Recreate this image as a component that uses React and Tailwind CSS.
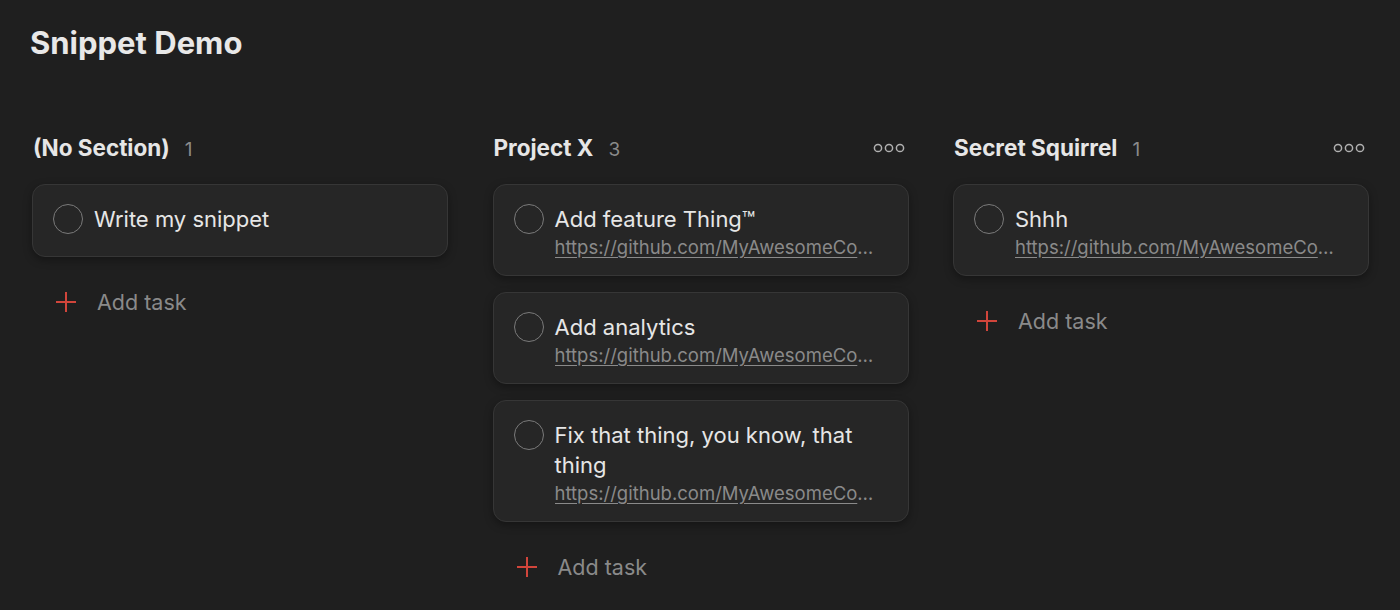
const sections = [
  {
    name: "(No Section)",
    count: 1,
    menu: false,
    tasks: [{ title: "Write my snippet" }],
  },
  {
    name: "Project X",
    count: 3,
    menu: true,
    tasks: [
      { title: "Add feature Thing™", link: "https://github.com/MyAwesomeCompany/MyAwesomeRepo/issues/1" },
      { title: "Add analytics", link: "https://github.com/MyAwesomeCompany/MyAwesomeRepo/issues/2" },
      { title: "Fix that thing, you know, that thing", link: "https://github.com/MyAwesomeCompany/MyAwesomeRepo/issues/3" },
    ],
  },
  {
    name: "Secret Squirrel",
    count: 1,
    menu: true,
    tasks: [{ title: "Shhh", link: "https://github.com/MyAwesomeCompany/MyAwesomeRepo/issues/4" }],
  },
];

const Dots = () => (
  <svg width="32" height="10" viewBox="0 0 32 10" className="text-[#b0b0b0]">
    <circle cx="5" cy="5" r="3.6" fill="none" stroke="currentColor" strokeWidth="1.5" />
    <circle cx="16" cy="5" r="3.6" fill="none" stroke="currentColor" strokeWidth="1.5" />
    <circle cx="27" cy="5" r="3.6" fill="none" stroke="currentColor" strokeWidth="1.5" />
  </svg>
);

const Plus = () => (
  <svg width="22" height="22" viewBox="0 0 22 22">
    <path d="M11 1v20M1 11h20" stroke="#d1453b" strokeWidth="2" />
  </svg>
);

const TaskCard = ({ task }) => (
  <div
    className={`flex gap-[11px] rounded-[13px] border border-[#363636] bg-[#262626] pl-[20px] pr-[27px] pt-[19px] shadow-[0_3px_8px_rgba(0,0,0,0.35)] ${
      task.link ? "pb-[14px]" : "pb-[22px]"
    }`}
  >
    <div className="h-[30px] w-[30px] shrink-0 rounded-full border-[1.5px] border-[#7a7a7a]" />
    <div className="min-w-0 flex-1">
      <div className="text-[22px] leading-[30px] text-[#e6e6e6]">{task.title}</div>
      {task.link && (
        <div className="truncate text-[18.5px] leading-[27px] text-[#8a8a8a] underline underline-offset-[3px]">
          {task.link}
        </div>
      )}
    </div>
  </div>
);

const Column = ({ section }) => (
  <div className="flex flex-col">
    <div className="flex h-[30px] items-center justify-between pr-[4px]">
      <div className="flex items-baseline gap-[15px] pl-[1px]">
        <span className="text-[22.5px] font-bold text-[#e6e6e6]">{section.name}</span>
        <span className="text-[19px] text-[#8a8a8a]">{section.count}</span>
      </div>
      {section.menu && <Dots />}
    </div>
    <div className="mt-[21px] flex flex-col gap-[16px]">
      {section.tasks.map((t) => (
        <TaskCard key={t.title} task={t} />
      ))}
    </div>
    <div className="mt-[30px] flex h-[30px] items-center gap-[20px] pl-[23px]">
      <Plus />
      <span className="text-[21.5px] text-[#8a8a8a]">Add task</span>
    </div>
  </div>
);

export default function App() {
  return (
    <div className="h-[610px] w-full overflow-hidden bg-[#1f1f1f] px-[30px] pt-[25px] font-['Inter',sans-serif]">
      <h1 className="text-[31px] font-bold leading-[36px] text-[#e8e8e8]">Snippet Demo</h1>
      <div className="mt-[72px] grid grid-cols-[416px_416px_416px] gap-x-[44.5px] pl-[2px]">
        {sections.map((s) => (
          <Column key={s.name} section={s} />
        ))}
      </div>
    </div>
  );
}
